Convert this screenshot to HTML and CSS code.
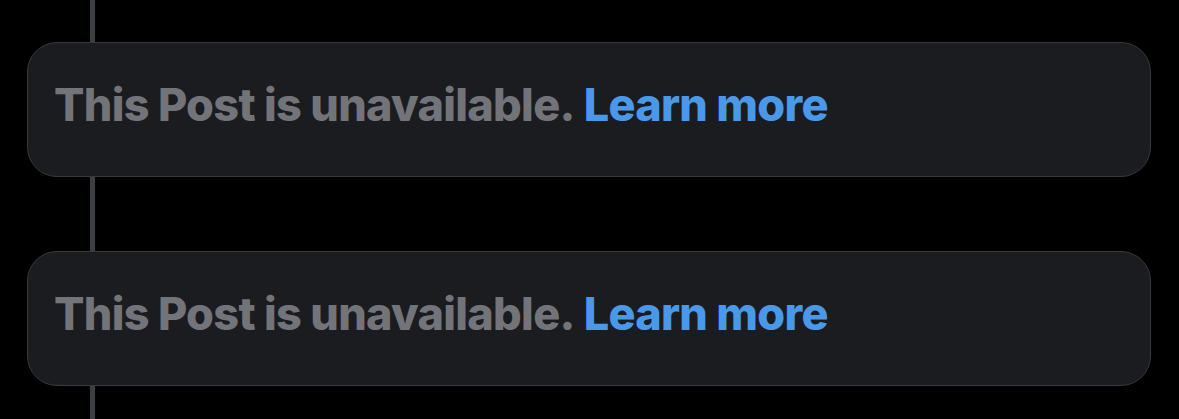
FILE: index.html
```html
<!DOCTYPE html>
<html lang="en">
<head>
    <meta charset="UTF-8">
    <meta name="viewport" content="width=device-width, initial-scale=1.0">
    <title>Thread</title>
    <link rel="stylesheet" href="styles.css">
</head>
<body>
    <div class="thread">
        <div class="tombstone">
            <span class="notice">This Post is unavailable.</span>
            <a class="learn" href="#">Learn more</a>
        </div>
        <div class="tombstone">
            <span class="notice">This Post is unavailable.</span>
            <a class="learn" href="#">Learn more</a>
        </div>
    </div>
</body>
</html>
```

FILE: styles.css
```css
body {
    margin: 0;
    background-color: #000;
    font-family: Inter, "Noto Sans", sans-serif;
    height: 419px;
    overflow: hidden;
}

.thread {
    position: relative;
    display: flex;
    flex-direction: column;
    gap: 74px;
    padding: 42px 0 0 27px;
    width: 1151px;
    min-height: 419px;
    box-sizing: border-box;
}

/* connector line running behind the cards */
.thread::before {
    content: "";
    position: absolute;
    left: 90px;
    top: 0;
    bottom: 0;
    width: 5px;
    background-color: #3d3e42;
}

.tombstone {
    position: relative;
    display: flex;
    align-items: center;
    gap: 9px;
    height: 135px;
    box-sizing: border-box;
    padding: 0 0 10px 26px;
    background-color: #1b1c20;
    border: 1px solid #38393d;
    border-radius: 30px;
    font-size: 45px;
    font-weight: 800;
    letter-spacing: -0.7px;
}

.notice {
    color: #737479;
}

.learn {
    color: #4a99e9;
    text-decoration: none;
}
```
